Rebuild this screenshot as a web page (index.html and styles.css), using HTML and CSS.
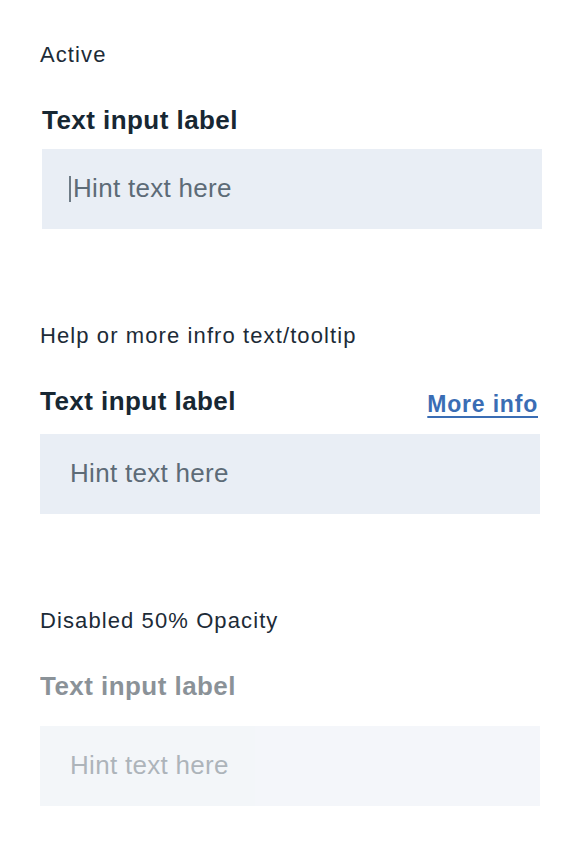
FILE: index.html
```html
<!DOCTYPE html>
<html lang="en">
<head>
<meta charset="utf-8">
<title>Text inputs</title>
<link rel="stylesheet" href="styles.css">
</head>
<body>
  <section class="state state-active">
    <h2 class="state-title">Active</h2>
    <div class="field field-shift">
      <div class="label-row"><label class="label">Text input label</label></div>
      <div class="input"><span class="cursor"></span><span class="hint">Hint text here</span></div>
    </div>
  </section>

  <section class="state state-help">
    <h2 class="state-title">Help or more infro text/tooltip</h2>
    <div class="field">
      <div class="label-row">
        <label class="label">Text input label</label>
        <a class="more-info" href="#">More info</a>
      </div>
      <div class="input"><span class="hint">Hint text here</span></div>
    </div>
  </section>

  <section class="state state-disabled">
    <h2 class="state-title">Disabled 50% Opacity</h2>
    <div class="field field-disabled">
      <div class="label-row"><label class="label">Text input label</label></div>
      <div class="input"><span class="hint">Hint text here</span></div>
    </div>
  </section>
</body>
</html>
```

FILE: styles.css
```css
html, body {
  margin: 0;
  padding: 0;
  background: #ffffff;
}

body {
  font-family: "Liberation Sans", Arial, Helvetica, sans-serif;
  padding: 42px 0 0 40px;
}

.state-title {
  margin: 0;
  font-size: 22px;
  line-height: 26px;
  font-weight: 400;
  letter-spacing: 1.1px;
  color: #1c2b37;
}

.state-help {
  margin-top: 94px;
}

.state-disabled {
  margin-top: 94px;
}

.field {
  margin-top: 37px;
  width: 500px;
}

.field-shift {
  margin-left: 2px;
}

.label-row {
  display: flex;
  justify-content: space-between;
  align-items: flex-end;
}

.label {
  font-size: 26px;
  line-height: 30px;
  font-weight: 700;
  letter-spacing: 0.45px;
  color: #172733;
}

.more-info {
  font-size: 23px;
  line-height: 24px;
  font-weight: 700;
  letter-spacing: 0.8px;
  color: #3a6db4;
  text-decoration: underline;
  text-decoration-thickness: 2px;
  text-underline-offset: 4px;
  margin-right: 2px;
}

.input {
  margin-top: 14px;
  height: 80px;
  box-sizing: border-box;
  padding: 0 0 0 30px;
  background: #e9eef5;
  font-size: 26px;
  line-height: 78px;
  color: #5d6b77;
  white-space: nowrap;
}

.state-help .input {
  margin-top: 18px;
}

.hint {
  letter-spacing: 0.3px;
}

.cursor {
  display: inline-block;
  width: 1.5px;
  height: 26px;
  margin-left: -3px;
  margin-right: 2.5px;
  vertical-align: -5px;
  background: #6f7c87;
}

.field-disabled {
  opacity: 0.5;
}

.field-disabled .input {
  margin-top: 25px;
}
```
